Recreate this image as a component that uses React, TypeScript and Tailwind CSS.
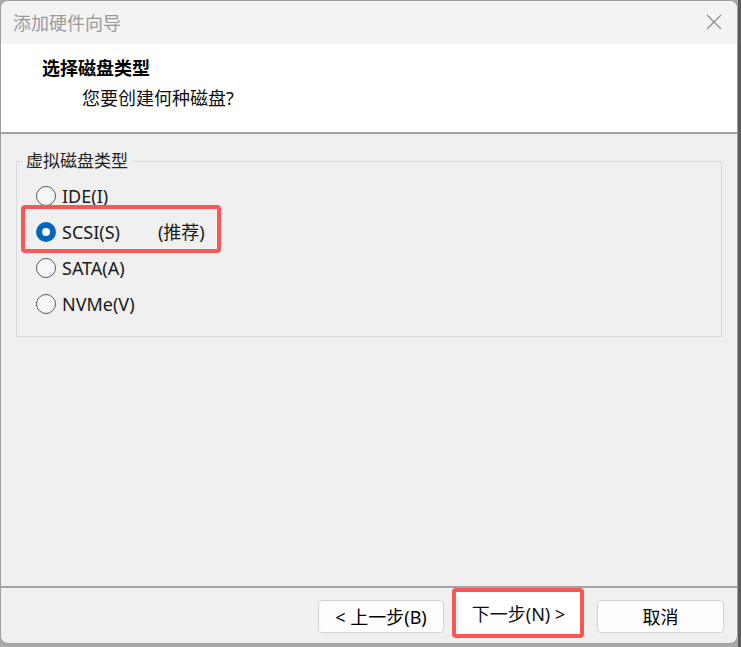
import React from "react";

const font = { fontFamily: '"Noto Sans", "Noto Sans CJK SC", sans-serif' };

const diskTypes = [
  { id: "ide", label: "IDE(I)", checked: false },
  { id: "scsi", label: "SCSI(S)", checked: true, note: "(推荐)" },
  { id: "sata", label: "SATA(A)", checked: false },
  { id: "nvme", label: "NVMe(V)", checked: false },
];

function Radio({ checked }: { checked: boolean }) {
  if (checked) {
    return (
      <span className="w-[20px] h-[20px] rounded-full bg-[#0067c0] flex items-center justify-center shrink-0">
        <span className="w-[8px] h-[8px] rounded-full bg-white" />
      </span>
    );
  }
  return (
    <span className="w-[20px] h-[20px] rounded-full border border-[#5a5a5a] bg-[#f6f6f6] shrink-0" />
  );
}

export default function App() {
  return (
    <div
      className="w-[741px] h-[647px] bg-[#a9a9a9] flex overflow-hidden"
      style={font}
    >
      <div className="w-[738px] h-[644px] rounded-[8px] border border-[#9d9d9d] bg-[#f0f0f0] flex flex-col overflow-hidden">
        {/* title bar */}
        <div className="h-[43px] bg-[#f3f3f3] flex items-center justify-between pl-[12px] pr-[15px] shrink-0">
          <span className="text-[18px] text-[#9a9a9a] leading-none">添加硬件向导</span>
          <svg width="16" height="16" viewBox="0 0 16 16" className="mt-[-1px]">
            <path d="M1 1 L15 15 M15 1 L1 15" stroke="#8c8c8c" strokeWidth="1.2" fill="none" />
          </svg>
        </div>

        {/* header */}
        <div className="h-[88px] bg-white pl-[41px] pt-[11px] shrink-0">
          <div className="text-[18px] font-bold text-black leading-[26px]">选择磁盘类型</div>
          <div className="text-[18px] text-[#111] leading-[26px] pl-[40px] mt-[4px]">您要创建何种磁盘?</div>
        </div>
        <div className="h-[2px] bg-[#a3a3a3] shrink-0" />

        {/* content */}
        <div className="flex-1 px-[15px] pt-[16px]">
          <fieldset className="border border-[#dadada] h-[187px]">
            <legend className="ml-[5px] px-[4px] text-[17px] leading-[22px] text-[#222]">虚拟磁盘类型</legend>
            <div className="pl-[19px] pt-[6px]">
              {diskTypes.map((d) => (
                <div key={d.id} className="relative h-[36px] flex items-center">
                  {d.checked && (
                    <div className="absolute left-[-15px] top-[-9px] w-[200px] h-[48px] border-[4px] border-[#f95656] rounded-[4px]" />
                  )}
                  <Radio checked={d.checked} />
                  <span className="ml-[6px] text-[18px] text-[#1a1a1a] leading-none">{d.label}</span>
                  {d.note && (
                    <span className="ml-[38px] text-[18px] text-[#1a1a1a] leading-none">{d.note}</span>
                  )}
                </div>
              ))}
            </div>
          </fieldset>
        </div>

        <div className="h-[2px] bg-[#a3a3a3] shrink-0" />

        {/* footer */}
        <div className="h-[55px] flex items-start justify-end pr-[13px] shrink-0">
          <button className="mt-[12px] w-[126px] h-[33px] bg-[#fdfdfd] border border-[#d3d3d3] rounded-[4px] text-[18px] text-black leading-none">
            &lt; 上一步(B)
          </button>
          <div className="ml-[8px] w-[132px] h-[50px] border-[4px] border-[#f95656] rounded-[4px] bg-white flex items-end pl-[1px] pb-[1px]">
            <button className="w-[122px] h-[38px] bg-white border-l border-[#e3e3e3] text-[18px] text-[#111] leading-none">
              下一步(N) &gt;
            </button>
          </div>
          <button className="ml-[13px] mt-[12px] w-[127px] h-[33px] bg-[#fdfdfd] border border-[#d3d3d3] rounded-[4px] text-[18px] text-black leading-none">
            取消
          </button>
        </div>
      </div>
      <div className="w-[3px] h-full bg-[#5c5c5c]" />
    </div>
  );
}
